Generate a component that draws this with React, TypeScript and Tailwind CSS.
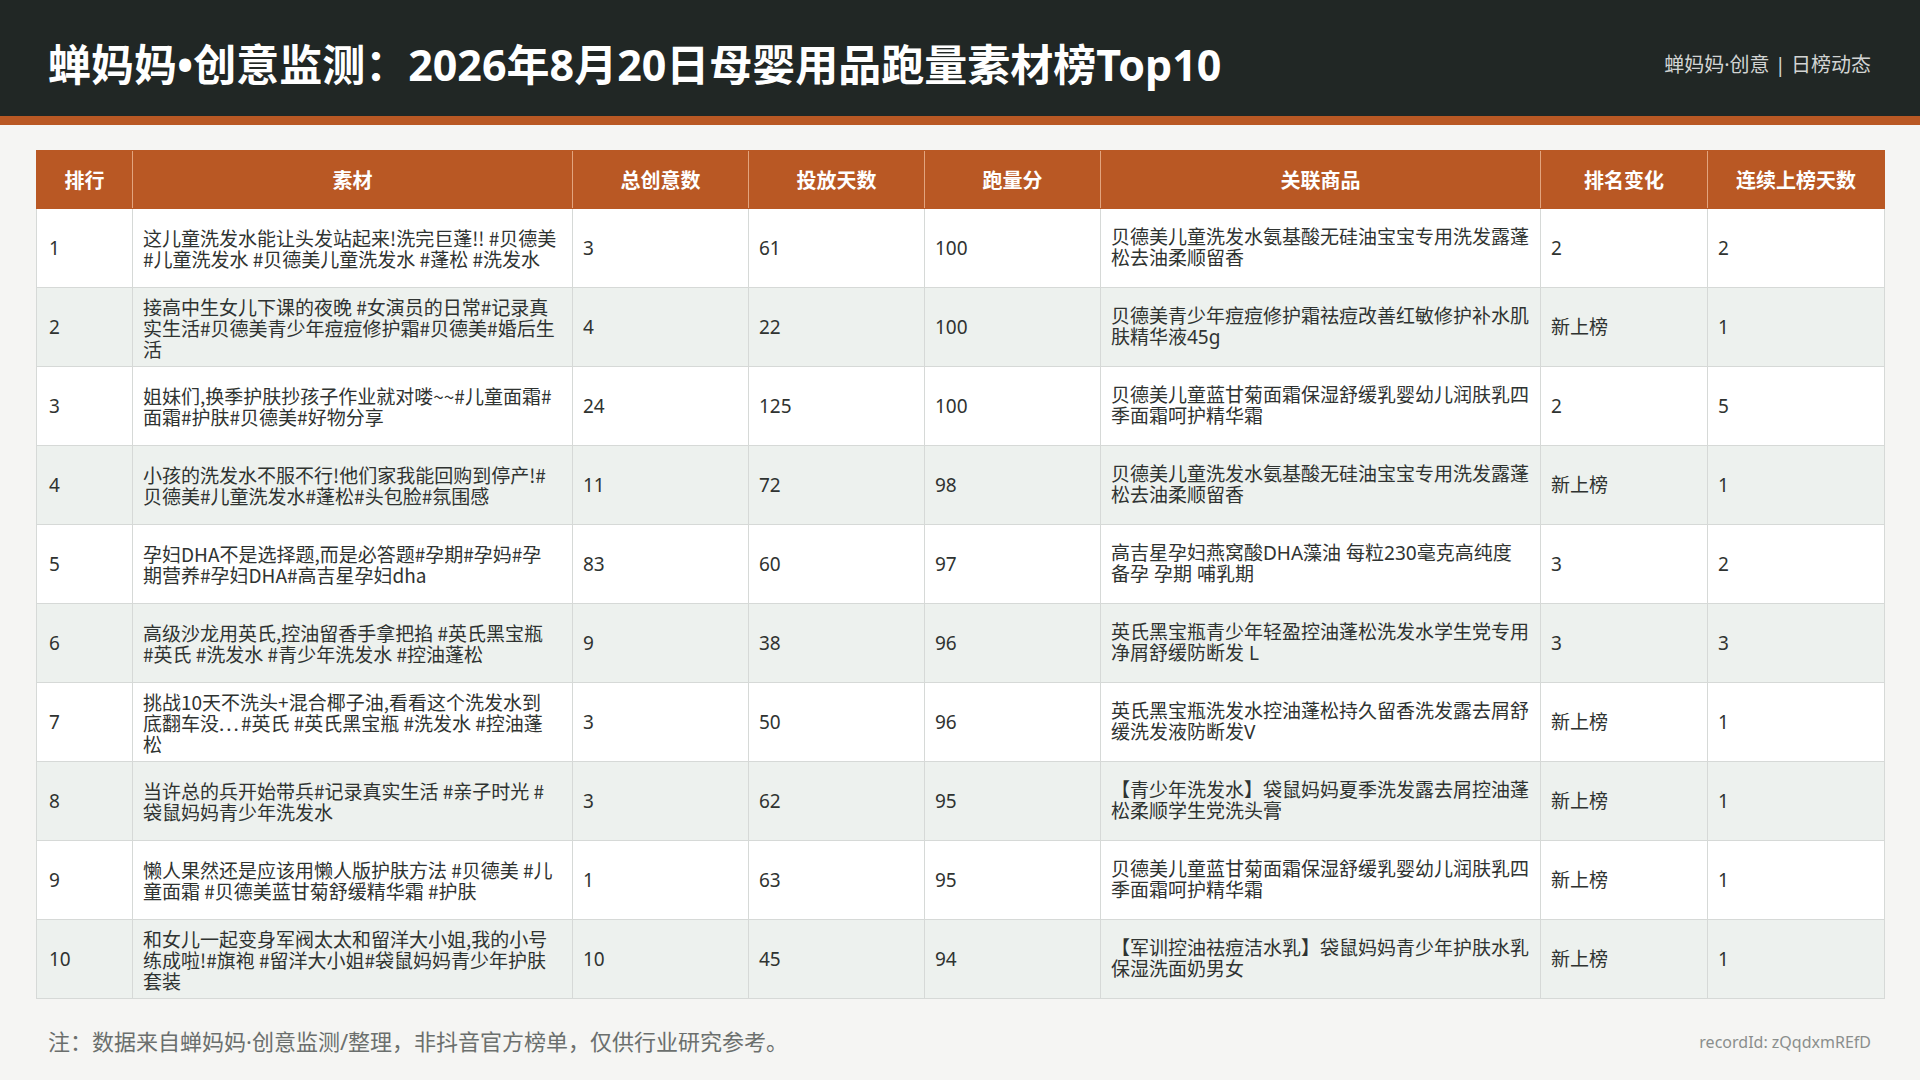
import React from 'react';

type Row = {
  rank: number;
  title: string;
  creatives: number;
  days: number;
  score: number;
  product: string;
  change: string;
  streak: number;
};

const rows: Row[] = [
  {
    rank: 1,
    title: '这儿童洗发水能让头发站起来!洗完巨蓬!! #贝德美 #儿童洗发水 #贝德美儿童洗发水 #蓬松 #洗发水',
    creatives: 3,
    days: 61,
    score: 100,
    product: '贝德美儿童洗发水氨基酸无硅油宝宝专用洗发露蓬松去油柔顺留香',
    change: '2',
    streak: 2,
  },
  {
    rank: 2,
    title: '接高中生女儿下课的夜晚 #女演员的日常#记录真实生活#贝德美青少年痘痘修护霜#贝德美#婚后生活',
    creatives: 4,
    days: 22,
    score: 100,
    product: '贝德美青少年痘痘修护霜祛痘改善红敏修护补水肌肤精华液45g',
    change: '新上榜',
    streak: 1,
  },
  {
    rank: 3,
    title: '姐妹们,换季护肤抄孩子作业就对喽~~#儿童面霜#面霜#护肤#贝德美#好物分享',
    creatives: 24,
    days: 125,
    score: 100,
    product: '贝德美儿童蓝甘菊面霜保湿舒缓乳婴幼儿润肤乳四季面霜呵护精华霜',
    change: '2',
    streak: 5,
  },
  {
    rank: 4,
    title: '小孩的洗发水不服不行!他们家我能回购到停产!#贝德美#儿童洗发水#蓬松#头包脸#氛围感',
    creatives: 11,
    days: 72,
    score: 98,
    product: '贝德美儿童洗发水氨基酸无硅油宝宝专用洗发露蓬松去油柔顺留香',
    change: '新上榜',
    streak: 1,
  },
  {
    rank: 5,
    title: '孕妇DHA不是选择题,而是必答题#孕期#孕妈#孕期营养#孕妇DHA#高吉星孕妇dha',
    creatives: 83,
    days: 60,
    score: 97,
    product: '高吉星孕妇燕窝酸DHA藻油 每粒230毫克高纯度备孕 孕期 哺乳期',
    change: '3',
    streak: 2,
  },
  {
    rank: 6,
    title: '高级沙龙用英氏,控油留香手拿把掐 #英氏黑宝瓶 #英氏 #洗发水 #青少年洗发水 #控油蓬松',
    creatives: 9,
    days: 38,
    score: 96,
    product: '英氏黑宝瓶青少年轻盈控油蓬松洗发水学生党专用净屑舒缓防断发 L',
    change: '3',
    streak: 3,
  },
  {
    rank: 7,
    title: '挑战10天不洗头+混合椰子油,看看这个洗发水到底翻车没...#英氏 #英氏黑宝瓶 #洗发水 #控油蓬松',
    creatives: 3,
    days: 50,
    score: 96,
    product: '英氏黑宝瓶洗发水控油蓬松持久留香洗发露去屑舒缓洗发液防断发V',
    change: '新上榜',
    streak: 1,
  },
  {
    rank: 8,
    title: '当许总的兵开始带兵#记录真实生活 #亲子时光 #袋鼠妈妈青少年洗发水',
    creatives: 3,
    days: 62,
    score: 95,
    product: '【青少年洗发水】袋鼠妈妈夏季洗发露去屑控油蓬松柔顺学生党洗头膏',
    change: '新上榜',
    streak: 1,
  },
  {
    rank: 9,
    title: '懒人果然还是应该用懒人版护肤方法 #贝德美 #儿童面霜 #贝德美蓝甘菊舒缓精华霜 #护肤',
    creatives: 1,
    days: 63,
    score: 95,
    product: '贝德美儿童蓝甘菊面霜保湿舒缓乳婴幼儿润肤乳四季面霜呵护精华霜',
    change: '新上榜',
    streak: 1,
  },
  {
    rank: 10,
    title: '和女儿一起变身军阀太太和留洋大小姐,我的小号练成啦!#旗袍 #留洋大小姐#袋鼠妈妈青少年护肤套装',
    creatives: 10,
    days: 45,
    score: 94,
    product: '【军训控油祛痘洁水乳】袋鼠妈妈青少年护肤水乳保湿洗面奶男女',
    change: '新上榜',
    streak: 1,
  },
];

const headers = ['排行', '素材', '总创意数', '投放天数', '跑量分', '关联商品', '排名变化', '连续上榜天数'];

const td = 'border border-[#d6d9d7] px-[10px] align-middle';

// the dots in "没..." sit a little looser in the source
const Title: React.FC<{ text: string }> = ({ text }) => {
  const parts = text.split('...');
  if (parts.length === 1) return <>{text}</>;
  return (
    <>
      {parts[0]}
      <span className="tracking-[2px]">...</span>
      {parts.slice(1).join('...')}
    </>
  );
};

export default function App() {
  return (
    <div
      className="w-[1920px] h-[1080px] bg-[#f5f5f3] flex flex-col overflow-hidden"
      style={{ fontFamily: '"Noto Sans", "Noto Sans CJK SC", sans-serif' }}
    >
      <header className="h-[116px] shrink-0 bg-[#212725] flex items-center justify-between pt-[14px] pl-[48px] pr-[49px]">
        <h1 className="text-white text-[43px] font-bold">蝉妈妈•创意监测：2026年8月20日母婴用品跑量素材榜Top10</h1>
        <div className="text-[#d2d4d3] text-[20px]">蝉妈妈·创意 | 日榜动态</div>
      </header>
      <div className="h-[9px] shrink-0 bg-[#b95824]" />

      <main className="px-[36px] pt-[25px]">
        <table className="w-[1848px] table-fixed border-collapse text-[19px] leading-[21px] text-[#2f3331]">
          <colgroup>
            <col className="w-[96px]" />
            <col className="w-[440px]" />
            <col className="w-[176px]" />
            <col className="w-[176px]" />
            <col className="w-[176px]" />
            <col className="w-[440px]" />
            <col className="w-[167px]" />
            <col className="w-[177px]" />
          </colgroup>
          <thead>
            <tr className="h-[58px] bg-[#b95824]">
              {headers.map((h, i) => (
                <th
                  key={h}
                  className={
                    'text-white text-[20px] font-bold text-center border-y border-[#b95824] ' +
                    (i === 0 ? 'border-l border-l-[#b95824] ' : 'border-l border-l-[#e2a47e] ') +
                    (i === headers.length - 1 ? 'border-r border-r-[#b95824]' : '')
                  }
                  style={{ fontFamily: '"Noto Sans CJK SC", sans-serif' }}
                >
                  {h}
                </th>
              ))}
            </tr>
          </thead>
          <tbody>
            {rows.map((r, i) => (
              <tr key={r.rank} className={'h-[79px] ' + (i % 2 === 1 ? 'bg-[#edf1ee]' : 'bg-white')}>
                <td className={td + ' pl-[12px]'}>{r.rank}</td>
                <td className={td + ' pr-[15px]'} style={{ fontFamily: '"Noto Sans CJK SC", sans-serif' }}>
                  <Title text={r.title} />
                </td>
                <td className={td}>{r.creatives}</td>
                <td className={td}>{r.days}</td>
                <td className={td}>{r.score}</td>
                <td className={td}>{r.product}</td>
                <td className={td}>{r.change}</td>
                <td className={td}>{r.streak}</td>
              </tr>
            ))}
          </tbody>
        </table>
      </main>

      <footer className="flex items-center justify-between pl-[48px] pr-[49px] mt-[26px]">
        <p className="text-[22px] text-[#6b6f6d]">注：数据来自蝉妈妈·创意监测/整理，非抖音官方榜单，仅供行业研究参考。</p>
        <p className="text-[16px] text-[#8a8e8c]">recordId: zQqdxmREfD</p>
      </footer>
    </div>
  );
}
